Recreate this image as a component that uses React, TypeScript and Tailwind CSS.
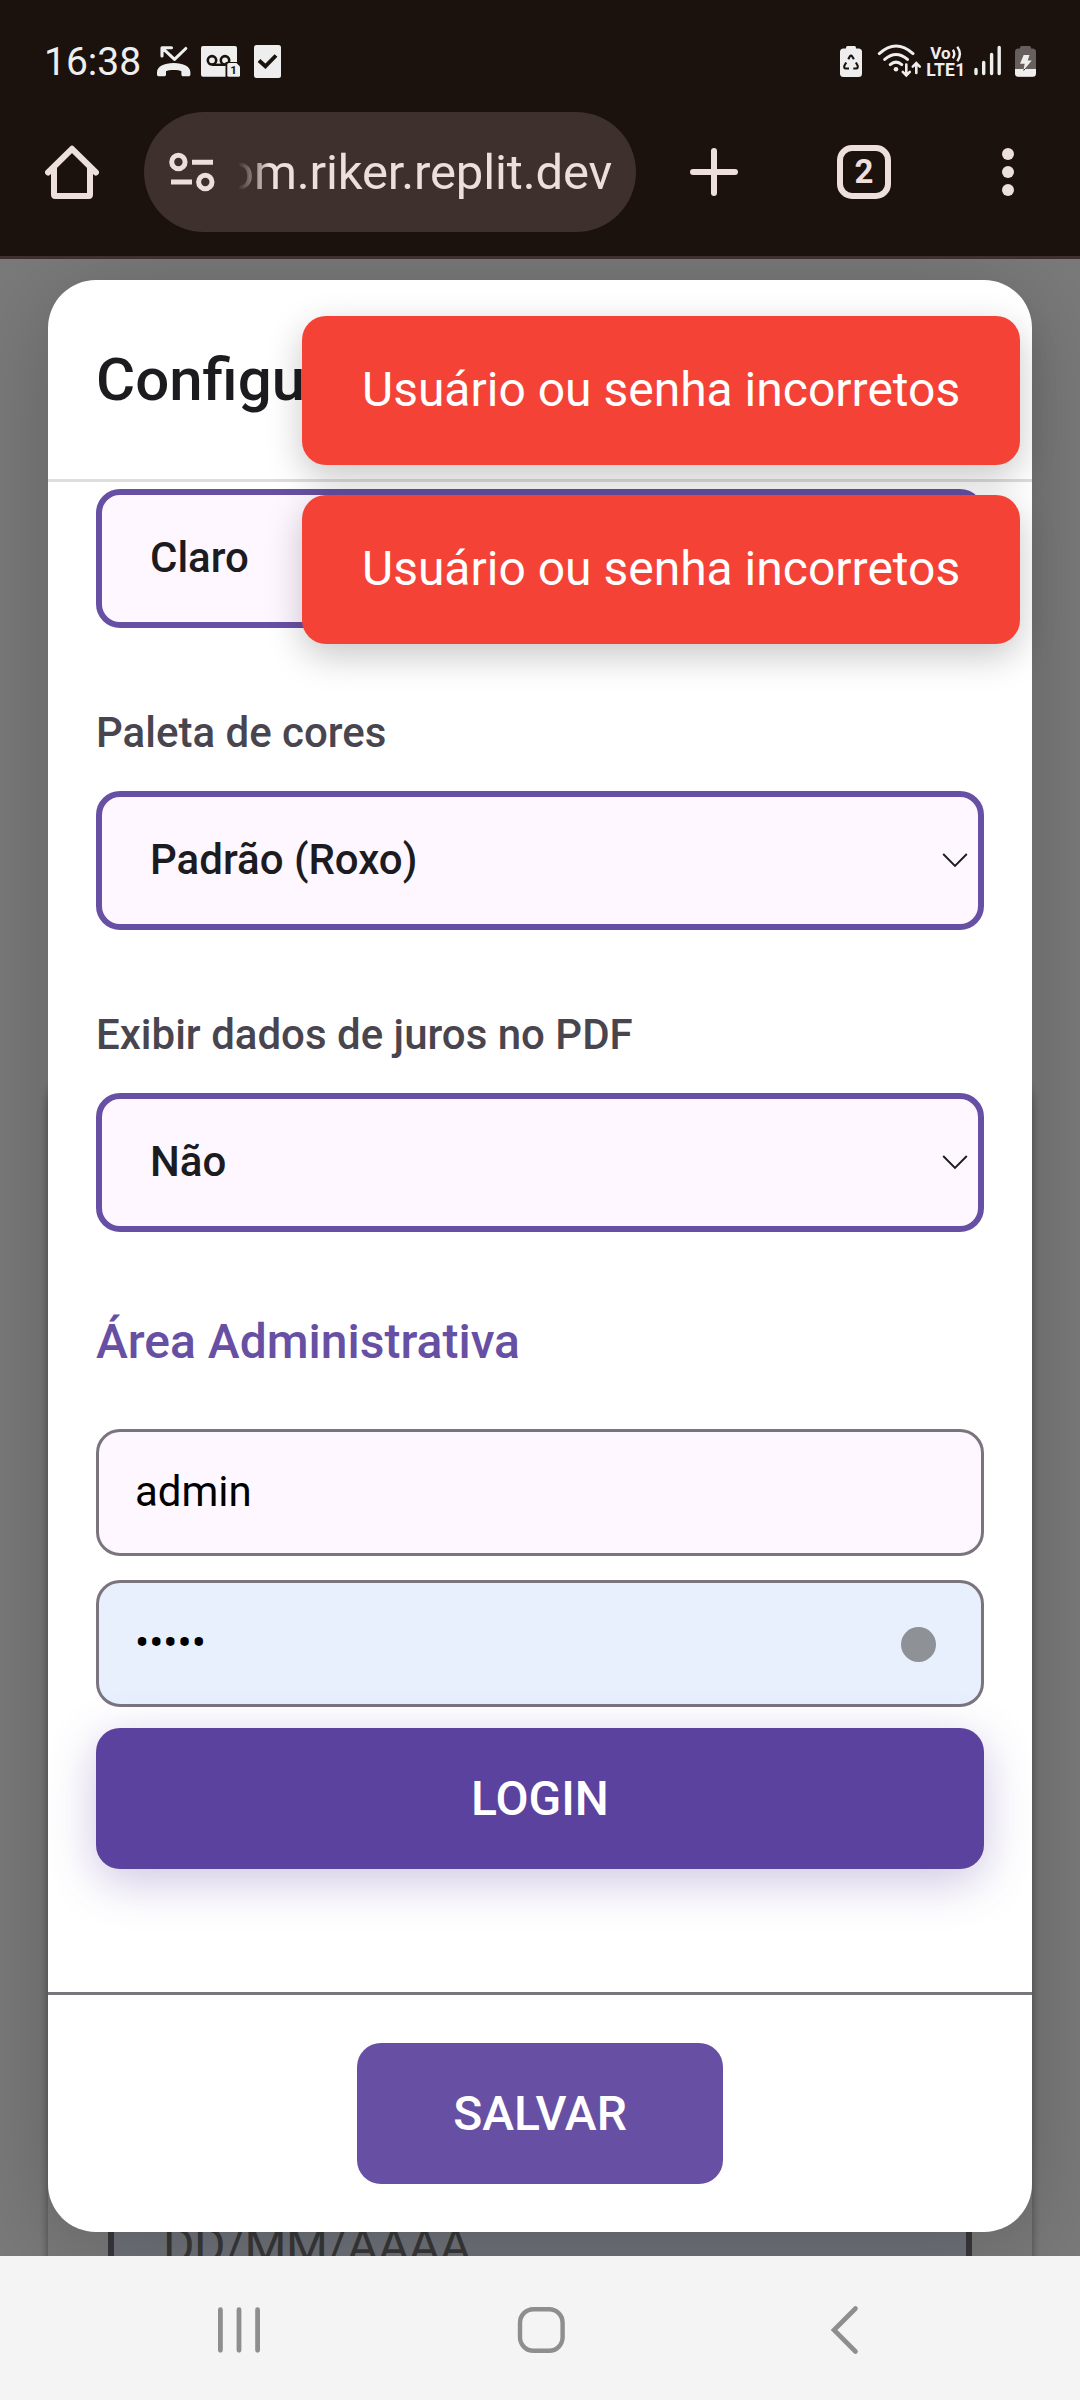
import React from 'react';

const INK = '#eeeeee';
const DARK = '#1b110d';
const CHROME = '#eddfdb';

function StatusBar() {
  return (
    <div className="flex h-[112px] items-start pt-[42px] pr-[44px] pl-[44px]">
      <span className="w-[113px] text-[39px] leading-[40px] text-[#eeeeee]">16:38</span>
      <svg className="h-[40px] w-[34px]" viewBox="157 42 34 40" fill="none">
        <path d="M185.800 48.500L174.500 59.300L162.500 48.200M162 56V47.800H171.500" stroke={INK} strokeWidth="3.100" strokeLinejoin="round" strokeLinecap="round" />
        <path d="M157 72.500C157 66.500 164 63 173.700 63C183.400 63 190.400 66.500 190.400 72.500V74.400C190.400 75.500 189.700 76.200 188.600 76.200H183.200C182 76.200 181.400 75.500 181.400 74.400V71.200C179 69.600 168.400 69.600 166 71.200V74.400C166 75.500 165.400 76.200 164.200 76.200H158.800C157.700 76.200 157 75.500 157 74.400Z" fill={INK} />
      </svg>
      <svg className="ml-[10px] h-[40px] w-[40px]" viewBox="201 42 40 40" fill="none">
        <rect x="201" y="46" width="36" height="30.700" rx="2" fill={INK} />
        <circle cx="212" cy="60.300" r="4.200" stroke={DARK} strokeWidth="2.600" />
        <circle cx="225" cy="60.300" r="4.200" stroke={DARK} strokeWidth="2.600" />
        <path d="M212 64.800H225" stroke={DARK} strokeWidth="2.400" />
        <path d="M225.500 78V62H242V78Z" fill={DARK} />
        <path d="M227.300 64.500Q227.300 63 228.800 63H236.500L240 66.500V75.200Q240 76.700 238.500 76.700H228.800Q227.300 76.700 227.300 75.200Z" fill={INK} />
        <text x="233.500" y="74.200" textAnchor="middle" fontFamily="Roboto, sans-serif" fontWeight="700" fontSize="11.500" fill={DARK}>1</text>
      </svg>
      <svg className="ml-[13px] h-[40px] w-[28px]" viewBox="254 42 28 40" fill="none">
        <rect x="254" y="45" width="27" height="33" rx="2.500" fill={INK} />
        <path d="M259 60.500L265.400 66.300L276 55.500" stroke={DARK} strokeWidth="3.900" />
      </svg>

      <svg className="ml-auto h-[40px] w-[22px]" viewBox="840 42 22 40" fill="none">
        <path d="M846 49V47.500Q846 46 847.500 46H854.500Q856 46 856 47.500V49Z" fill={INK} />
        <rect x="840" y="48.500" width="22" height="28.500" rx="3.500" fill={INK} />
        <path d="M848.300 59.300L849.900 56.300Q851 54.700 852.100 56.300L853.900 59.300M855.900 62.500L857.600 65.600Q858.400 68.300 856 68.500H853.300M849 68.500H845.800Q843.600 68.300 844.400 65.600L846.200 62.500" stroke={DARK} strokeWidth="2.100" />
      </svg>
      <svg className="ml-[14px] h-[40px] w-[46px]" viewBox="876 42 46 40" fill="none">
        <g stroke={INK} strokeWidth="3" strokeLinecap="round">
          <path d="M879.300 53.600Q896 38.500 913 53.600" />
          <path d="M884.700 59.400Q896 49.500 907.500 59.400" />
          <path d="M890.200 64.600Q896 59.600 901.800 64.600" />
          <path d="M906.300 64.500V74.500M902.800 71.800L906.300 75.300L909.800 71.800" strokeWidth="2.600" />
          <path d="M916.300 73V63.500M912.800 66.600L916.300 63.100L919.800 66.600" strokeWidth="2.600" />
        </g>
        <circle cx="896" cy="69.300" r="2.300" fill={INK} />
      </svg>
      <svg className="ml-[4px] h-[40px] w-[40px]" viewBox="926 42 40 40" fill="none">
        <text x="930.300" y="59" fontFamily="Roboto, sans-serif" fontWeight="700" fontSize="17" fill={INK}>Vo</text>
        <path d="M952.800 49.800Q955.800 54 952.800 58.200M957.300 46.800Q962.500 54 957.300 61.300" stroke={INK} strokeWidth="2.400" />
        <text x="926.200" y="76" textLength="39" fontFamily="Roboto, sans-serif" fontWeight="700" fontSize="17.500" fill={INK}>LTE1</text>
      </svg>
      <svg className="ml-[8px] h-[40px] w-[27px]" viewBox="974 42 27 40" fill="none">
        <path d="M976 69.500V73.500M983.700 62.500V73.500M991.600 54.500V73.500M999.200 47.500V73.500" stroke={INK} strokeWidth="3.400" strokeLinecap="round" />
      </svg>
      <svg className="ml-[14px] h-[40px] w-[21px]" viewBox="1015 42 21 40" fill="none">
        <path d="M1020 49V47.500Q1020 46 1021.500 46H1029.500Q1031 46 1031 47.500V49Z" fill="#665f5d" />
        <rect x="1015" y="48.500" width="21" height="28.300" rx="3.500" fill="#665f5d" />
        <path d="M1015 69H1036V73.300Q1036 76.800 1032.500 76.800H1018.500Q1015 76.800 1015 73.300Z" fill={INK} />
        <path d="M1023.700 55H1029.500L1027.700 60.500H1031.800L1023.300 70.500L1024.700 63.800H1020Z" fill={INK} />
        <path d="M1023.800 69L1023.300 71.300L1025.300 69Z" fill={DARK} />
      </svg>
    </div>
  );
}

function Toolbar() {
  return (
    <div className="flex h-[120px] items-center pl-[45px]">
      <svg className="h-[54px] w-[54px]" viewBox="45 145 54 54" fill="none" stroke={CHROME} strokeWidth="6">
        <path d="M48 172.500L72 148.800L96 172.500" strokeLinecap="round" strokeLinejoin="round" />
        <path d="M54 168V194.500Q54 196 55.500 196H88.500Q90 196 90 194.500V168" />
      </svg>
      <div className="ml-[45px] flex h-[120px] w-[492px] items-center rounded-full bg-[#3e302d] pl-[25px]">
        <svg className="h-[40px] w-[46px]" viewBox="169 152 46 40" fill="none" stroke={CHROME} strokeWidth="5">
          <circle cx="178.400" cy="162" r="6.700" />
          <path d="M192 162.200H213M171 182H192" />
          <circle cx="205.300" cy="182" r="6.700" />
        </svg>
        <div className="ml-[23px] flex w-[374px] justify-end overflow-hidden [mask-image:linear-gradient(to_right,transparent_0px,black_32px)]">
          <span className="text-[49px] leading-[121px] tracking-[-0.15px] whitespace-nowrap text-[#eddfdb]">om.riker.replit.dev</span>
        </div>
      </div>
      <svg className="ml-[54px] h-[48px] w-[48px]" viewBox="0 0 48 48" fill="none">
        <path d="M24 3V45M3 24H45" stroke={CHROME} strokeWidth="6" strokeLinecap="round" />
      </svg>
      <div className="ml-[99px] flex h-[54px] w-[54px] items-center justify-center rounded-[15px] border-[6px] border-[#eddfdb] text-[33px] leading-[42px] font-bold text-[#eddfdb]">2</div>
      <div className="ml-[111px] flex flex-col gap-[6px]">
        <span className="size-[12px] rounded-full bg-[#eddfdb]" />
        <span className="size-[12px] rounded-full bg-[#eddfdb]" />
        <span className="size-[12px] rounded-full bg-[#eddfdb]" />
      </div>
    </div>
  );
}

function SelectBox({ value }: { value: string }) {
  return (
    <div className="flex h-[139px] shrink-0 items-center justify-between rounded-[24px] border-[6px] border-[#6750a4] bg-[#fef7ff] pr-[9px] pb-[2px] pl-[48px]">
      <span className="text-[42px] leading-[125px] font-medium text-[#1c1b1f]">{value}</span>
      <svg className="h-[16px] w-[28px]" viewBox="0 0 28 16" fill="none">
        <path d="M2.200 2L14 14L25.800 2" stroke="#1c1b1f" strokeWidth="1.900" />
      </svg>
    </div>
  );
}

function Field({ label, value }: { label: string; value: string }) {
  return (
    <div className="mt-[73px] flex flex-col gap-[27px]">
      <label className="text-[42px] leading-[63px] font-medium text-[#49454f]">{label}</label>
      <SelectBox value={value} />
    </div>
  );
}

function Toast() {
  return (
    <div className="h-[149px] w-[718px] rounded-[24px] bg-[#f44336] px-[60px] text-[48px] leading-[147px] whitespace-nowrap text-white shadow-[0_12px_36px_rgba(0,0,0,0.22)]">
      Usuário ou senha incorretos
    </div>
  );
}

function Modal() {
  return (
    <div className="relative mx-[48px] mt-[21px] flex h-[1952px] flex-col overflow-hidden rounded-[48px] bg-white">
      <div className="flex h-[202px] shrink-0 items-center border-b-[3px] border-[#dddddd] px-[48px]">
        <h2 className="text-[60px] leading-[80px] font-medium text-[#1c1b1f]">Configurações</h2>
      </div>
      <div className="flex h-[1510px] shrink-0 flex-col px-[48px] pt-[7px]">
        <SelectBox value="Claro" />
        <Field label="Paleta de cores" value="Padrão (Roxo)" />
        <Field label="Exibir dados de juros no PDF" value="Não" />
        <h3 className="mt-[73px] text-[48px] leading-[73px] font-medium text-[#6750a4]">Área Administrativa</h3>
        <div className="mt-[51px] h-[127px] rounded-[24px] border-[3px] border-[#79747e] bg-[#fef7ff] px-[36px] text-[42px] leading-[119px] text-black">
          admin
        </div>
        <div className="mt-[24px] flex h-[127px] items-center justify-between rounded-[24px] border-[3px] border-[#79747e] bg-[#e8f0fe] pr-[45px] pl-[36px]">
          <span className="pb-[2px] text-[42px] leading-[119px] text-black">•••••</span>
          <span className="mt-[2px] size-[35px] rounded-full bg-[#8e9195]" />
        </div>
        <button className="mt-[21px] h-[141px] rounded-[24px] bg-[#5b429e] text-[48px] leading-[141px] font-medium text-white shadow-[0_12px_48px_rgba(90,64,158,0.3)]">
          LOGIN
        </button>
      </div>
      <div className="flex h-[240px] shrink-0 items-center justify-center border-t-[3px] border-[#79747e]">
        <button className="h-[141px] w-[366px] rounded-[24px] bg-[#6750a4] text-[48px] leading-[141px] font-medium text-white">
          SALVAR
        </button>
      </div>
    </div>
  );
}

function NavBar() {
  return (
    <div className="flex h-[144px] items-center bg-[#f4f4f4] pl-[216px]">
      <svg className="mt-[4px] h-[50px] w-[46px]" viewBox="216 2305 46 50" fill="none" stroke="#8e8e8e" strokeWidth="4.800" strokeLinecap="round">
        <path d="M220.400 2309.700V2350.300M239 2309.700V2350.300M257.600 2309.700V2350.300" />
      </svg>
      <svg className="mt-[4px] ml-[253px] h-[50px] w-[52px]" viewBox="515 2305 52 50" fill="none" stroke="#8e8e8e" strokeWidth="4.400">
        <rect x="520" y="2309.200" width="42.600" height="41.600" rx="13.500" />
      </svg>
      <svg className="mt-[4px] ml-[261px] h-[50px] w-[32px]" viewBox="828 2305 32 50" fill="none" stroke="#8e8e8e" strokeWidth="4.600" strokeLinecap="round">
        <path d="M855.500 2308.500L834 2330L855.500 2351.500" />
      </svg>
    </div>
  );
}

export default function App() {
  return (
    <div className="flex h-[2400px] w-[1080px] flex-col overflow-hidden bg-white font-['Roboto',sans-serif]">
      <header className="h-[259px] shrink-0 border-b-[3px] border-[#3d302d] bg-[#1b110d]">
        <StatusBar />
        <Toolbar />
      </header>
      <main className="relative h-[1997px] shrink-0 overflow-hidden bg-white">
        {/* Page content under the dialog */}
        <div className="absolute top-[798px] left-[48px] h-[1400px] w-[984px] rounded-[48px] bg-white px-[60px] pt-[1109px] shadow-[0_3px_9px_rgba(0,0,0,0.4)]">
          <div className="h-[141px] rounded-[24px] border-[6px] border-[#79747e] bg-[#e8f0fe] px-[49px] pt-[3px] text-[48px] leading-[141px] tracking-[-0.4px] text-[#757575]">
            DD/MM/AAAA
          </div>
        </div>
        <div className="absolute inset-0 bg-black/52" />
        <div className="absolute top-[21px] left-[48px] h-[1952px] w-[984px] rounded-[48px] shadow-[0_12px_96px_rgba(0,0,0,0.2)]" />
        <Modal />
        {/* Stacked notifications */}
        <div className="absolute top-[57px] left-[302px] flex flex-col gap-[30px]">
          <Toast />
          <Toast />
        </div>
      </main>
      <NavBar />
    </div>
  );
}
